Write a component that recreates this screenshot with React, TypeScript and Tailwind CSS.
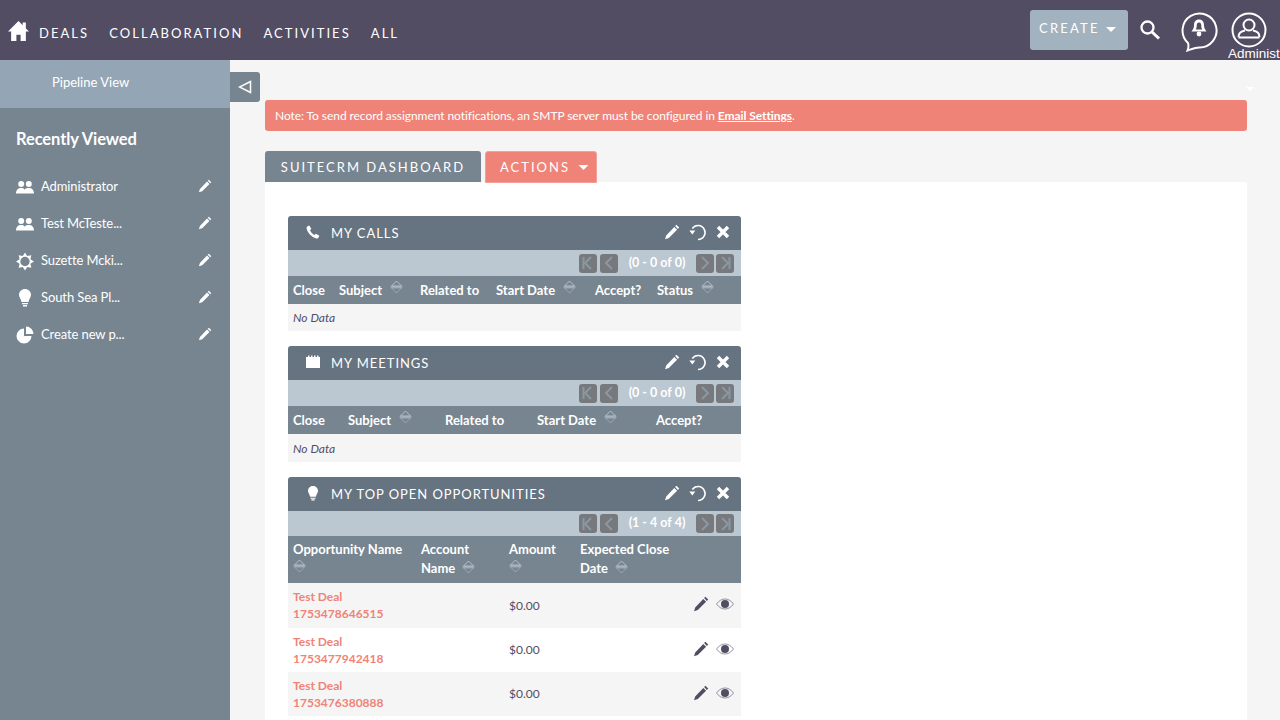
import { ReactNode } from 'react';

const PencilIcon = ({ className }: { className: string }) => (
  <svg viewBox="0 0 16 16" className={className} fill="currentColor">
    <path d="M12.400 0.800l2.800 2.800-1.300 1.300-2.800-2.800zM10.300 2.900l2.800 2.800-8.300 8.300-3.800 1.200 1.200-3.800z" />
  </svg>
);

const SortIcon = () => (
  <svg viewBox="0 0 13 14" className="w-[13px] h-[14px] shrink-0 text-[#c4ced6]" fill="none" stroke="currentColor" strokeWidth="0.8">
    <path d="M1.500 6l5-5 5 5z" />
    <path d="M1.500 8l5 5 5-5z" className="opacity-60" />
    <path d="M0.500 7h12" />
  </svg>
);

const Caret = ({ className }: { className: string }) => (
  <svg viewBox="0 0 10 5" className={className} fill="currentColor">
    <path d="M0 0h10L5 5z" />
  </svg>
);

const UsersIcon = () => (
  <svg viewBox="0 0 18 14" className="w-[18px] h-[14px]" fill="currentColor">
    <circle cx="5.200" cy="4" r="3" />
    <circle cx="12.800" cy="4" r="3" />
    <path d="M0 13.500c0-3.500 2-5.500 5.200-5.500 2 0 3 .7 3.500 1.700.6-1 1.800-1.700 4-1.700 3.300 0 5.300 2 5.300 5.500z" />
  </svg>
);

const StarburstIcon = () => (
  <svg viewBox="0 0 20 20" className="w-[19px] h-[19px]" fill="currentColor" fillRule="evenodd">
    <path d="M10 0l2.490 4 4.580-1.070L16 7.510 20 10l-4 2.490 1.070 4.580L12.490 16 10 20l-2.490-4-4.580 1.070L4 12.490 0 10l4-2.490-1.070-4.580L7.510 4zM10 4.800a5.200 5.200 0 1 0 0 10.400 5.200 5.200 0 0 0 0-10.400z" />
  </svg>
);

const BulbIcon = ({ className }: { className: string }) => (
  <svg viewBox="0 0 12 18" className={className} fill="currentColor">
    <path d="M6 0c3.300 0 6 2.500 6 5.800 0 2.700-2 4-2.500 7.200h-7C2 9.800 0 8.500 0 5.800 0 2.500 2.700 0 6 0z" />
    <path d="M3 14h6v1.200H3zM4 16h4v1.500H4z" />
  </svg>
);

const PieIcon = () => (
  <svg viewBox="0 0 18 18" className="w-[18px] h-[18px]" fill="currentColor">
    <path d="M8 2.500V10h7.500A7.500 7.500 0 1 1 8 2.500z" />
    <path d="M10 0.500A7.500 7.500 0 0 1 17.500 8H10z" />
  </svg>
);

const PhoneIcon = () => (
  <svg viewBox="0 0 14 14" className="w-[14px] h-[14px]" fill="currentColor">
    <path d="M3.300 0.500L5.300 3.800 4 5.300c.6 1.800 2.500 3.800 4.500 4.700l1.400-1.300 3.500 2-1.200 2.200c-.5.600-1.300.800-2 .6C5.500 12 1.700 8 .6 3.500.4 2.700.6 2 1.200 1.500z" />
  </svg>
);

const CalendarIcon = () => (
  <svg viewBox="0 0 14 14" className="w-[14px] h-[14px]" fill="currentColor">
    <path d="M0 2h2V0.500h1.500V2h1.500V0.500h1.500V2h1.500V0.500H9.500V2H11V0.500h1.500V2H14v11H0z" />
  </svg>
);

const PagerButton = ({ dir, end }: { dir: 'left' | 'right'; end?: boolean }) => (
  <span className="w-[18px] h-[19px] rounded-[3px] bg-[#77797d] flex items-center justify-center">
    <svg viewBox="0 0 12 14" className="w-[12px] h-[14px] text-[#8a98a4]" fill="none" stroke="currentColor" strokeWidth="2">
      {dir === 'left' ? <path d="M9 1L3 7l6 6" /> : <path d="M3 1l6 6-6 6" />}
      {end && (dir === 'left' ? <path d="M1.500 1v12" /> : <path d="M10.500 1v12" />)}
    </svg>
  </span>
);

const Dashlet = ({
  icon,
  title,
  range,
  pagerHeight = 'h-[26px]',
  children,
}: {
  icon: ReactNode;
  title: string;
  range: string;
  pagerHeight?: string;
  children: ReactNode;
}) => (
  <section className="w-[453px]">
    <header className="h-[34px] bg-[#667380] rounded-t-[3px] flex items-center text-white">
      <span className="w-[43px] flex justify-center pl-[6px] -mt-[2px]">{icon}</span>
      <h3 className="text-[13px] tracking-[0.95px] uppercase pt-[2px]">{title}</h3>
      <div className="ml-auto flex items-center gap-[8px] pr-[11px] -mt-[2px]">
        <PencilIcon className="w-[16px] h-[16px]" />
        <svg viewBox="0 0 18 18" className="w-[19px] h-[18px]" fill="none" stroke="currentColor" strokeWidth="1.600">
          <path d="M3.800 5.500A7 7 0 1 1 9.500 16.500" />
          <path d="M0.800 7.500h6L3.800 11.500z" fill="currentColor" stroke="none" />
        </svg>
        <svg viewBox="0 0 14 14" className="w-[14px] h-[14px] ml-[1px]" fill="none" stroke="currentColor" strokeWidth="3.400">
          <path d="M2 2l10 10M12 2L2 12" />
        </svg>
      </div>
    </header>
    <div className={`${pagerHeight} bg-[#bbc8d1] flex items-center justify-end pr-[7px] text-white`}>
      <div className="flex gap-[3px]">
        <PagerButton dir="left" end />
        <PagerButton dir="left" />
      </div>
      <span className="w-[78px] text-center text-[12.500px] font-bold">{range}</span>
      <div className="flex gap-[2px]">
        <PagerButton dir="right" />
        <PagerButton dir="right" end />
      </div>
    </div>
    {children}
  </section>
);

const HeadCell = ({ label, sort }: { label: string; sort?: boolean }) => (
  <div className="flex items-start gap-[8px]">
    <span>{label}</span>
    {sort && <span className="-mt-[1px]"><SortIcon /></span>}
  </div>
);

const dealRows = [
  { id: '1753478646515', bg: 'bg-[#f5f5f5]', height: 'h-[45px]', link: '-mt-[2px]' },
  { id: '1753477942418', bg: 'bg-white', height: 'h-[44px]', link: '' },
  { id: '1753476380888', bg: 'bg-[#f5f5f5]', height: 'h-[44px]', link: '' },
];

const recentItems = [
  { label: 'Administrator', icon: <UsersIcon /> },
  { label: 'Test McTeste...', icon: <UsersIcon /> },
  { label: 'Suzette Mcki...', icon: <StarburstIcon /> },
  { label: 'South Sea Pl...', icon: <BulbIcon className="w-[12px] h-[18px]" /> },
  { label: 'Create new p...', icon: <PieIcon /> },
];

export default function App() {
  return (
    <div className="w-[1280px] h-[720px] overflow-hidden flex flex-col bg-[#f5f5f5] font-['Lato','Open_Sans',sans-serif] text-[#534d64]">
      <nav className="h-[60px] shrink-0 bg-[#534d64] text-white flex items-center relative overflow-hidden">
        <svg viewBox="0 0 20 19" className="w-[21px] h-[20px] ml-[8px] mr-[10px] mt-[2px]" fill="currentColor">
          <path d="M10 0L0 10h3v9h5v-6h4v6h5v-9h3l-3-3V1.500h-3v2.500z" />
        </svg>
        <div className="flex gap-[20px] text-[13px] tracking-[2.050px] uppercase mt-[8px]">
          <span>Deals</span>
          <span>Collaboration</span>
          <span>Activities</span>
          <span>All</span>
        </div>
        <div className="ml-auto flex items-start h-full">
          <button className="mt-[10px] h-[40px] w-[98px] rounded-[3px] bg-[#a2b2be] flex items-center pl-[9px] pb-[2px] gap-[6px] text-[13px] tracking-[2.200px]">
            CREATE
            <Caret className="w-[10px] h-[5px]" />
          </button>
          <svg viewBox="0 0 22 22" className="w-[22px] h-[22px] mt-[19px] ml-[11px]" fill="none" stroke="currentColor">
            <circle cx="8.500" cy="8.500" r="6" strokeWidth="2.300" />
            <path d="M13 13l7 6.500" strokeWidth="3" />
          </svg>
          <svg viewBox="0 0 38 42" className="w-[38px] h-[42px] mt-[10px] ml-[19px]" fill="none" stroke="currentColor">
            <path d="M8 33A17 17 0 1 1 19 37.500C15.500 37.500 12 39 7.500 40.500 8.500 38 8.800 35.500 8 33z" strokeWidth="2" />
            <path d="M19 9.500c3.500 0 5 2.500 5 6 0 3 1.500 4.500 2.500 6h-15c1-1.500 2.500-3 2.500-6 0-3.500 1.500-6 5-6z" fill="currentColor" stroke="none" />
            <circle cx="19" cy="24" r="2.400" fill="currentColor" stroke="none" />
            <path d="M19 12.500c1.800 0 2.300 1.500 2.300 3.500 0 1.500.4 2.500 1 3.500h-6.600c.6-1 1-2 1-3.500 0-2 .5-3.500 2.300-3.500z" fill="#534d64" stroke="none" />
          </svg>
          <div className="w-[49px] relative ml-[13px]">
            <svg viewBox="0 0 36 36" className="w-[36px] h-[36px] mt-[12px]" fill="none" stroke="currentColor" strokeWidth="2">
              <circle cx="18" cy="18" r="16.500" />
              <circle cx="18" cy="13" r="5.500" />
              <path d="M7.500 25c0-4 3.500-6 6.500-6.500M28.500 25c0-4-3.500-6-6.500-6.500M7.500 25.500h21" />
            </svg>
            <span className="absolute left-[-3px] top-[46px] text-[13.500px] leading-[16px] font-['Liberation_Sans',sans-serif] whitespace-nowrap">Administ</span>
          </div>
        </div>
      </nav>

      <div className="flex-1 flex min-h-0 relative">
        <aside className="w-[230px] shrink-0 bg-[#778591] text-white">
          <div className="h-[48px] bg-[#94a6b6] flex items-center pl-[52px] pb-[2px] text-[13px]">Pipeline View</div>
          <h2 className="pl-[16px] mt-[20px] text-[16.500px] font-bold leading-[22px] tracking-[-0.100px]">Recently Viewed</h2>
          <ul className="mt-[25px] flex flex-col gap-[13px]">
            {recentItems.map((item) => (
              <li key={item.label} className="h-[24px] flex items-center pl-[16px] pr-[18px] text-[13px] tracking-[-0.100px]">
                <span className="w-[18px] flex justify-center shrink-0">{item.icon}</span>
                <span className="ml-[7px]">{item.label}</span>
                <PencilIcon className="w-[14px] h-[14px] ml-auto -mt-[2px]" />
              </li>
            ))}
          </ul>
        </aside>

        <button className="absolute left-[230px] top-[12px] w-[30px] h-[30px] rounded-r-[3px] bg-[#778591] text-white flex items-center justify-center">
          <svg viewBox="0 0 14 14" className="w-[14px] h-[14px]" fill="none" stroke="currentColor" strokeWidth="1.500">
            <path d="M12.500 1.500v11L1.500 7z" />
          </svg>
        </button>
        <Caret className="absolute left-[1246px] top-[27px] w-[8px] h-[4px] text-white" />

        <main className="flex-1 min-w-0 pl-[35px] pr-[33px] pt-[40px]">
          <div className="h-[31px] bg-[#f08377] rounded-[3px] text-white text-[12px] tracking-[-0.070px] flex items-center pl-[10px]">
            <span>
              Note: To send record assignment notifications, an SMTP server must be configured in{' '}
              <a className="font-bold underline">Email Settings</a>.
            </span>
          </div>

          <div className="mt-[20px] flex gap-[4px] text-white text-[13px] tracking-[2px]">
            <div className="h-[31px] w-[216px] bg-[#778591] rounded-t-[3px] flex items-center justify-center pt-[3px]">SUITECRM DASHBOARD</div>
            <div className="h-[32px] -mb-[1px] w-[112px] bg-[#f08377] border border-[#f3a097] rounded-t-[3px] flex items-center pl-[14px] gap-[8px] relative z-10 pt-[1px]">
              ACTIONS
              <Caret className="w-[11px] h-[5px]" />
            </div>
          </div>

          <div className="bg-white rounded-[3px] h-[600px] pl-[23px] pt-[34px] flex flex-col gap-[15px]">
            <Dashlet icon={<PhoneIcon />} title="My Calls" range="(0 - 0 of 0)">
              <div className="h-[28px] bg-[#778591] text-white font-bold text-[13px] grid grid-cols-[46px_81px_76px_99px_62px_1fr] pl-[5px] pt-[2px] items-center">
                <HeadCell label="Close" />
                <HeadCell label="Subject" sort />
                <HeadCell label="Related to" />
                <HeadCell label="Start Date" sort />
                <HeadCell label="Accept?" />
                <HeadCell label="Status" sort />
              </div>
              <div className="h-[27px] bg-[#f5f5f5] pl-[5px] flex items-center text-[12px] italic">No Data</div>
            </Dashlet>

            <Dashlet icon={<CalendarIcon />} title="My Meetings" range="(0 - 0 of 0)">
              <div className="h-[28px] bg-[#778591] text-white font-bold text-[13px] grid grid-cols-[55px_97px_92px_119px_1fr] pl-[5px] pt-[2px] items-center">
                <HeadCell label="Close" />
                <HeadCell label="Subject" sort />
                <HeadCell label="Related to" />
                <HeadCell label="Start Date" sort />
                <HeadCell label="Accept?" />
              </div>
              <div className="h-[28px] bg-[#f5f5f5] pl-[5px] pt-[2px] flex items-center text-[12px] italic">No Data</div>
            </Dashlet>

            <Dashlet icon={<BulbIcon className="w-[10px] h-[15px]" />} title="My Top Open Opportunities" range="(1 - 4 of 4)" pagerHeight="h-[25px]">
              <div className="h-[47px] bg-[#778591] text-white font-bold text-[13px] leading-[19px] grid grid-cols-[128px_88px_71px_1fr] pl-[5px] pt-[4px] items-start">
                <div className="flex flex-col">
                  <span>Opportunity Name</span>
                  <SortIcon />
                </div>
                <div className="flex flex-col">
                  <span>Account</span>
                  <span className="flex items-center gap-[7px]">Name <span className="-mt-[3px]"><SortIcon /></span></span>
                </div>
                <div className="flex flex-col">
                  <span>Amount</span>
                  <SortIcon />
                </div>
                <div className="flex flex-col">
                  <span>Expected Close</span>
                  <span className="flex items-center gap-[7px]">Date <span className="-mt-[3px]"><SortIcon /></span></span>
                </div>
              </div>
              {dealRows.map((row) => (
                <div key={row.id} className={`${row.height} ${row.bg} grid grid-cols-[216px_71px_1fr] pl-[5px] items-center text-[12px]`}>
                  <a className={`font-bold text-[#f08377] leading-[17px] ${row.link}`}>
                    Test Deal
                    <br />
                    {row.id}
                  </a>
                  <span>$0.00</span>
                  <div className="flex items-center justify-end gap-[7px] pr-[7px] -mt-[3px]">
                    <PencilIcon className="w-[16px] h-[16px]" />
                    <svg viewBox="0 0 18 12" className="w-[18px] h-[12px]" fill="currentColor">
                      <path d="M0.500 6C3 2.500 6 1 9 1s6 1.500 8.500 5C15 9.500 12 11 9 11S3 9.500 0.500 6z" fill="none" stroke="currentColor" strokeWidth="0.600" />
                      <circle cx="9" cy="6" r="4" />
                    </svg>
                  </div>
                </div>
              ))}
            </Dashlet>
          </div>
        </main>
      </div>
    </div>
  );
}
